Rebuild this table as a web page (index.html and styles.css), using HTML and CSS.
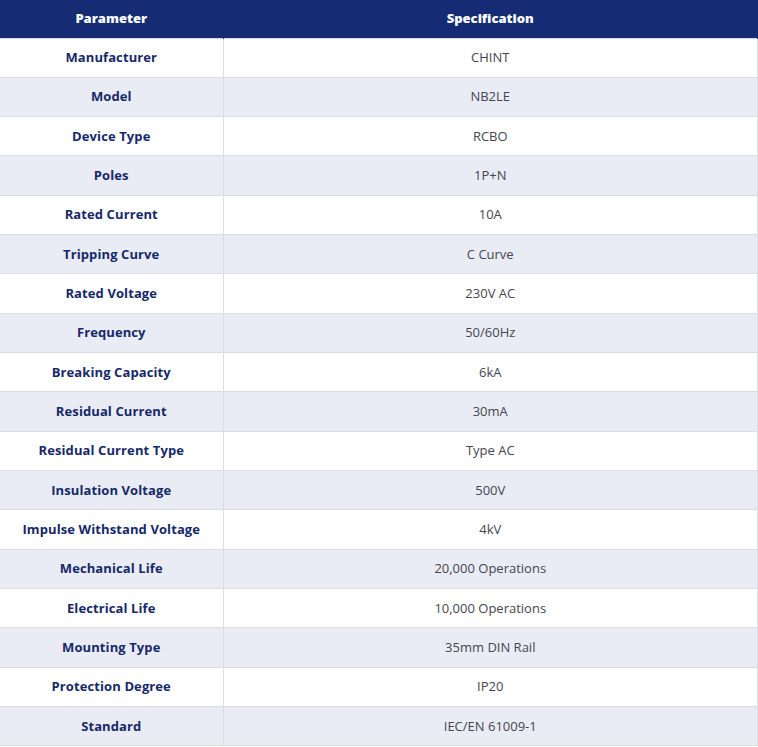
FILE: index.html
```html
<!DOCTYPE html>
<html lang="en">
<head>
<meta charset="utf-8">
<title>Specifications</title>
<link rel="stylesheet" href="styles.css">
</head>
<body>
<table class="spec">
  <thead>
    <tr><th class="col-param">Parameter</th><th>Specification</th></tr>
  </thead>
  <tbody>
    <tr><td class="label">Manufacturer</td><td class="value">CHINT</td></tr>
    <tr><td class="label">Model</td><td class="value">NB2LE</td></tr>
    <tr><td class="label">Device Type</td><td class="value">RCBO</td></tr>
    <tr><td class="label">Poles</td><td class="value">1P+N</td></tr>
    <tr><td class="label">Rated Current</td><td class="value">10A</td></tr>
    <tr><td class="label">Tripping Curve</td><td class="value">C Curve</td></tr>
    <tr><td class="label">Rated Voltage</td><td class="value">230V AC</td></tr>
    <tr><td class="label">Frequency</td><td class="value">50/60Hz</td></tr>
    <tr><td class="label">Breaking Capacity</td><td class="value">6kA</td></tr>
    <tr><td class="label">Residual Current</td><td class="value">30mA</td></tr>
    <tr><td class="label">Residual Current Type</td><td class="value">Type AC</td></tr>
    <tr><td class="label">Insulation Voltage</td><td class="value">500V</td></tr>
    <tr><td class="label">Impulse Withstand Voltage</td><td class="value">4kV</td></tr>
    <tr><td class="label">Mechanical Life</td><td class="value">20,000 Operations</td></tr>
    <tr><td class="label">Electrical Life</td><td class="value">10,000 Operations</td></tr>
    <tr><td class="label">Mounting Type</td><td class="value">35mm DIN Rail</td></tr>
    <tr><td class="label">Protection Degree</td><td class="value">IP20</td></tr>
    <tr><td class="label">Standard</td><td class="value">IEC/EN 61009-1</td></tr>
  </tbody>
</table>
</body>
</html>
```
FILE: styles.css
```css
html, body {
  margin: 0;
  padding: 0;
  background: #ffffff;
}
body {
  font-family: "Open Sans", "Liberation Sans", sans-serif;
  font-size: 13px;
}
.spec {
  width: 758px;
  border-collapse: collapse;
  table-layout: fixed;
}
.spec th,
.spec td {
  text-align: center;
  line-height: 19.33px;
  padding: 9.5px 8px;
  box-sizing: border-box;
}
.spec th {
  background: #152c75;
  color: #ffffff;
  font-weight: 800;
  padding-top: 0;
  padding-bottom: 1px;
  height: 38px;
  border-left: 1px solid #132763;
  border-right: 1px solid #152c75;
}
.spec th:first-child {
  border-left: none;
}
.spec .col-param {
  width: 223px;
}
.spec td {
  border: 1px solid #dcdde2;
}
.spec td:first-child {
  border-left: none;
}
.spec tbody tr:nth-child(even) td {
  background: #e9ecf4;
}
.spec .label {
  color: #16296a;
  font-weight: 700;
  letter-spacing: 0.1px;
}
.spec .value {
  color: #444650;
  font-weight: 400;
}
```
